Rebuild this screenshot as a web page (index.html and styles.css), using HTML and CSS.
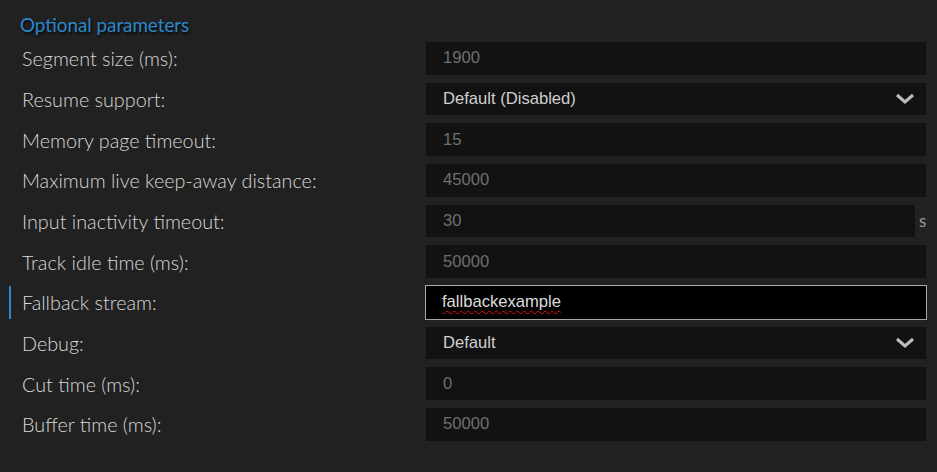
FILE: index.html
```html
<!DOCTYPE html>
<html>
<head>
<meta charset="utf-8">
<link rel="stylesheet" href="styles.css">
</head>
<body>
<div class="panel">
  <h2 class="heading">Optional parameters</h2>
  <div class="grid">
    <label class="label">Segment size (ms):</label>
    <div class="field"><span class="ph">1900</span></div>

    <label class="label">Resume support:</label>
    <div class="field select"><span class="val">Default (Disabled)</span>
      <svg class="chev" width="20" height="11" viewBox="0 0 20 11"><polyline points="2,2 10,9 18,2" fill="none" stroke="#bdbdbd" stroke-width="3"/></svg>
    </div>

    <label class="label">Memory page timeout:</label>
    <div class="field"><span class="ph">15</span></div>

    <label class="label">Maximum live keep-away distance:</label>
    <div class="field"><span class="ph">45000</span></div>

    <label class="label">Input inactivity timeout:</label>
    <div class="unitwrap">
      <div class="field"><span class="ph">30</span></div>
      <span class="unit">s</span>
    </div>

    <label class="label">Track idle time (ms):</label>
    <div class="field"><span class="ph">50000</span></div>

    <label class="label active">Fallback stream:</label>
    <div class="field focused"><span class="typed">fallbackexample</span></div>

    <label class="label">Debug:</label>
    <div class="field select"><span class="val">Default</span>
      <svg class="chev" width="20" height="11" viewBox="0 0 20 11"><polyline points="2,2 10,9 18,2" fill="none" stroke="#bdbdbd" stroke-width="3"/></svg>
    </div>

    <label class="label">Cut time (ms):</label>
    <div class="field"><span class="ph">0</span></div>

    <label class="label">Buffer time (ms):</label>
    <div class="field"><span class="ph">50000</span></div>
  </div>
</div>
</body>
</html>
```

FILE: styles.css
```css
html, body {
  margin: 0;
  padding: 0;
  background: #212121;
}
body {
  width: 937px;
  height: 472px;
  overflow: hidden;
}
.panel {
  padding: 0 11px 0 9px;
  font-family: Lato, "Noto Sans", sans-serif;
}
.heading {
  margin: 0;
  padding: 13px 0 0 11px;
  height: 29px;
  font-size: 18.8px;
  font-weight: 400;
  line-height: 24px;
  color: #2b88cc;
  text-shadow: 1px 2px 2px rgba(0,0,0,0.8);
}
.grid {
  display: grid;
  grid-template-columns: 417px 1fr;
  grid-auto-rows: 32.67px;
  row-gap: 8px;
}
.label {
  display: flex;
  align-items: center;
  border-left: 2px solid transparent;
  padding-left: 11px;
  font-size: 19.8px;
  font-weight: 300;
  color: #d8d8d8;
}
.label.active {
  border-left-color: #2b88cc;
}
.field {
  display: flex;
  align-items: center;
  background: #121212;
  padding: 0 11px 0 17px;
  font-family: "Liberation Sans", Arial, sans-serif;
  font-size: 16.6px;
  min-width: 0;
}
.ph {
  color: #6f6f6f;
}
.val {
  color: #d0d0d0;
  flex: 1;
}
.chev {
  display: block;
}
.unitwrap {
  display: flex;
  align-items: stretch;
}
.unitwrap .field {
  flex: 1;
}
.unit {
  width: 11px;
  padding-left: 4px;
  box-sizing: border-box;
  display: flex;
  align-items: center;
  font-size: 17px;
  color: #9a9a9a;
}
.field.focused {
  background: #000;
  border: 1px solid #a8a8a8;
  margin: -1px;
  padding-left: 16px;
}
.typed {
  color: #dcdcdc;
  text-decoration: underline wavy #e01010;
  text-decoration-thickness: 1px;
  text-underline-offset: 3px;
}
```
